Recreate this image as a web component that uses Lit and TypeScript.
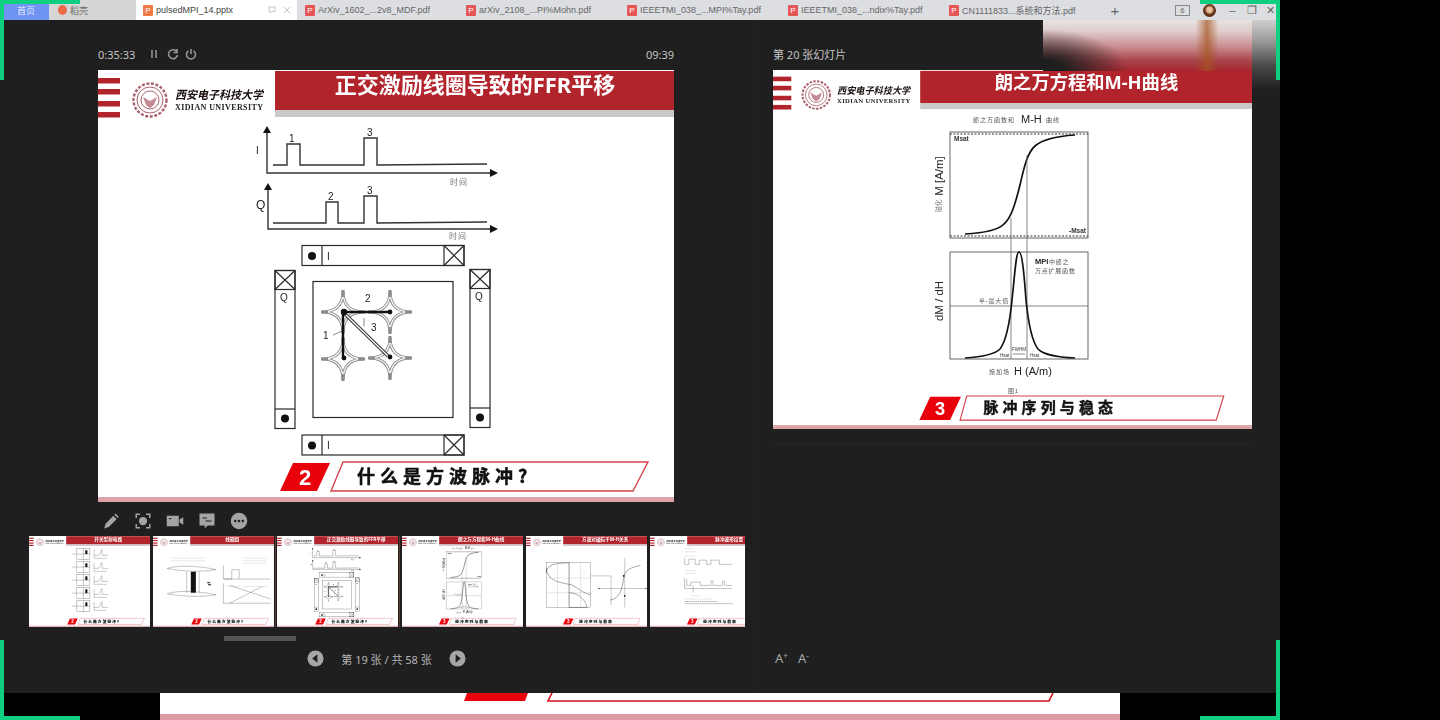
import { LitElement, html, svg, css } from "lit";
import { customElement, property } from "lit/decorators.js";

const STRIPES = [8, 19, 31, 42];

function star(cx: number, cy: number) {
  const r = 21;
  const d = `M${cx} ${cy - r}Q${cx} ${cy} ${cx + r} ${cy}Q${cx} ${cy} ${cx} ${cy + r}Q${cx} ${cy} ${cx - r} ${cy}Q${cx} ${cy} ${cx} ${cy - r}Z`;
  const tips = `M${cx} ${cy - r - 1}V${cy - r + 6}M${cx} ${cy + r + 1}V${cy + r - 6}M${cx - r - 1} ${cy}H${cx - r + 6}M${cx + r + 1} ${cy}H${cx + r - 6}`;
  return svg`<path class="star-o" d=${d}></path><path class="star-i" d=${d}></path><path class="star-t" d=${tips}></path>`;
}

function xBox(x: number, y: number, w: number, h: number) {
  return svg`<rect class="ln" x=${x} y=${y} width=${w} height=${h}></rect>
    <path class="ln" d="M${x} ${y}L${x + w} ${y + h}M${x + w} ${y}L${x} ${y + h}"></path>`;
}

function axis(x: number, top: number, y: number) {
  return svg`<path class="ln2" d="M${x} ${top}V${y}H493"></path>
    <path class="fillk" d="M${x - 4} ${top + 2}L${x} ${top - 5}L${x + 4} ${top + 2}Z"></path>
    <path class="fillk" d="M490 ${y - 4}L498 ${y}L490 ${y + 4}Z"></path>`;
}

function slide19Body() {
  return svg`<g transform="translate(-98,-70)">
    ${axis(267, 131, 173)}
    <path class="ln2" d="M273 165H287V144H300V165H364V138H377V165L487 164"></path>
    <text class="lbl" x="289" y="142">1</text>
    <text class="lbl" x="367" y="136">3</text>
    <text class="lbl" x="256" y="154">I</text>
    <text class="tiny" x="450" y="185">时间</text>
    ${axis(268, 188, 229)}
    <path class="ln2" d="M273 223H326V202H338V223H364V196H377V223L487 222"></path>
    <text class="lbl" x="328" y="200">2</text>
    <text class="lbl" x="367" y="194">3</text>
    <text class="lbl-b" x="256" y="209">Q</text>
    <text class="tiny" x="449" y="239">时间</text>

    <rect class="ln" x="302" y="245.5" width="162" height="20"></rect>
    <path class="ln" d="M322 245.5V265.5"></path>
    ${xBox(444, 245.5, 20, 20)}
    <circle class="fillk" cx="312" cy="256" r="4"></circle>
    <text class="lbl" x="327" y="260">I</text>

    <rect class="ln" x="302" y="435" width="162" height="20"></rect>
    <path class="ln" d="M322 435V455"></path>
    ${xBox(444, 435, 20, 20)}
    <circle class="fillk" cx="312" cy="445.5" r="4"></circle>
    <text class="lbl" x="327" y="449">I</text>

    <rect class="ln" x="275" y="270.5" width="20" height="158"></rect>
    ${xBox(275, 270.5, 20, 19)}
    <path class="ln" d="M275 409H295"></path>
    <circle class="fillk" cx="285" cy="418.5" r="4"></circle>
    <text class="lbl" x="280" y="301">Q</text>

    <rect class="ln" x="470" y="269.5" width="20" height="158"></rect>
    ${xBox(470, 269.5, 20, 19)}
    <path class="ln" d="M470 408H490"></path>
    <circle class="fillk" cx="480" cy="417.5" r="4"></circle>
    <text class="lbl" x="475" y="300">Q</text>

    <rect class="ln" x="313" y="281.5" width="140" height="136"></rect>
    ${star(343, 312)} ${star(390, 312)} ${star(343, 359)} ${star(390, 358)}
    <path class="ln3" d="M343 312H390M343 312V359"></path>
    <path class="star-o2" d="M345 314L388 356"></path>
    <path class="star-i2" d="M345 314L388 356"></path>
    <circle class="fillk" cx="344" cy="312" r="3.2"></circle>
    <circle class="fillk" cx="390" cy="312" r="2.4"></circle>
    <circle class="fillk" cx="344" cy="358" r="2.4"></circle>
    <circle class="fillk" cx="390" cy="357" r="2.4"></circle>
    <path class="thin" d="M333 335L342 331M364 318V326"></path>
    <text class="lbl" x="323" y="339">1</text>
    <text class="lbl" x="365" y="302">2</text>
    <text class="lbl" x="371" y="331">3</text>
  </g>`;
}

function slide20Body() {
  const curve1 = "M965 234C985 233 998 230 1004 224C1011 218 1015 205 1020 185C1024 168 1027 153 1035 146C1044 138 1060 136 1075 135";
  const curve2 = "M965 358C982 357 994 355 1000 349C1007 340 1010 320 1012 300C1015 272 1016 252 1019 252C1022 252 1024 272 1026 300C1028 320 1031 340 1038 349C1044 355 1056 357 1075 358";
  return svg`<g transform="scale(1.2025) translate(-773,-70)">
    <text class="cap" x="973" y="122">郎之万函数和</text>
    <text class="cap-b" x="1021" y="123">M-H</text>
    <text class="cap" x="1046" y="122">曲线</text>
    <rect class="plot" x="950" y="132" width="138" height="106"></rect>
    <path class="dash" d="M950 134H1088M950 236H1088"></path>
    <path class="curve" d=${curve1}></path>
    <text class="p-s" x="954" y="141">Msat</text>
    <text class="p-s" x="1069" y="233">-Msat</text>
    <text class="rot" transform="translate(943,176) rotate(-90)">M [A/m]</text>
    <text class="rot-s" transform="translate(941,206) rotate(-90)">磁化</text>
    <path class="vl" d="M1011 218V359M1027 155V359"></path>
    <rect class="plot" x="950" y="252" width="138" height="107"></rect>
    <path class="vl" d="M950 306H1088"></path>
    <path class="curve" d=${curve2}></path>
    <text class="p-b" x="1035" y="264">MPI</text>
    <text class="cap2" x="1049" y="264">中郎之</text>
    <text class="cap2" x="1035" y="273">万点扩展函数</text>
    <text class="cap2" x="979" y="303">半-最大值</text>
    <text class="p-t" x="1012" y="351">FWHM</text>
    <path class="thin" d="M1013 354H1025"></path>
    <text class="p-t" x="1000" y="357">Hsat</text>
    <text class="p-t" x="1030" y="357">Hsat</text>
    <text class="rot" transform="translate(943,301) rotate(-90)">dM / dH</text>
    <text class="cap" x="989" y="374">施加场</text>
    <text class="cap-c" x="1014" y="375">H (A/m)</text>
    <text class="cap2" x="1008" y="393">图1</text>
  </g>`;
}

function thumbCircuit() {
  const rows = [60, 122, 184, 246, 308];
  return svg`${rows.map(
    (y) => svg`
      <rect class="ln" x="228" y=${y} width="62" height="52"></rect>
      <path class="ln" d="M259 ${y}V${y + 52}M228 ${y + 26}H290"></path>
      <rect class="fillk" x="268" y=${y + 8} width="10" height="18"></rect>
      <path class="ln" d="M310 ${y + 6}V${y + 46}H370M310 ${y + 32}H330C340 ${y + 32} 340 ${y + 4} 348 ${y + 4}V${y + 32}H376"></path>
      <path class="ln" d="M205 ${y + 26}H226"></path>`
  )}`;
}

function thumbCoil() {
  return svg`
    <path class="ln2" d="M68 155C120 165 220 175 300 160C240 145 120 135 68 155Z"></path>
    <path class="ln2" d="M68 275C120 285 220 295 300 280C240 265 120 255 68 275Z"></path>
    <rect class="fillk" x="180" y="170" width="24" height="100"></rect>
    <path class="ln" d="M160 170V270M220 170V270"></path>
    <path class="thin" d="M85 105H250M85 118H250"></path>
    <path class="ln2" d="M335 140V205H560M335 205H375V160H410V205"></path>
    <path class="ln2" d="M335 225V320H560M365 235L560 300M365 320L520 240"></path>
    <path class="thin" d="M430 105H540M430 118H540M430 130H540M350 240H420M430 240H540"></path>
    <path class="fillk" d="M258 220h14v5h-14zM262 230h14v5h-14z"></path>`;
}

function thumbBH() {
  return svg`
    <rect class="ln" x="96" y="125" width="212" height="215"></rect>
    <path class="thin" d="M96 200H308M96 270H308M150 125V340M205 125V340M260 125V340"></path>
    <path class="curve" d="M96 175C100 140 130 128 205 128V230C230 230 260 270 308 280"></path>
    <path class="curve" d="M96 150C100 210 150 220 205 230V340H290C290 320 260 270 205 270"></path>
    <path class="ln" d="M308 190H405V330M340 250H580"></path>
    <path class="curve" d="M400 305C450 300 460 240 465 200C470 160 500 150 545 140"></path>
    <path class="ln" d="M470 105V340"></path>
    <path class="fillk" d="M345 250l6-4v8zM575 250l-6-4v8z"></path>
    <circle class="fillk" cx="465" cy="190" r="4"></circle>
    <circle class="fillk" cx="470" cy="285" r="4"></circle>`;
}

function thumbPulses() {
  return svg`
    <path class="thin" d="M165 60H205M165 75H220M165 95H215M165 165H215M165 178H225"></path>
    <path class="ln2" d="M165 105V135H185V110H215V135H235V115H270V135H290V115H330V135H390"></path>
    <path class="ln2" d="M165 200V250H390M175 205V235H195V220H240V235H290V215H300V235H345V215H355V235H390M205 235V270"></path>
    <path class="thin" d="M195 285H240M165 300H300"></path>
    <text class="t-mini" x="165" y="315">1 2 3 4 5 6 7 8 9 10 11 12 13 14</text>
    <path class="ln2" d="M165 322H395"></path>`;
}

const SLIDES: Record<string, { title: string; foot: string; num: string; body: () => unknown; fx: number }> = {
  a: { title: "开关型射电路", foot: "什么是方波脉冲?", num: "2", body: thumbCircuit, fx: 0 },
  b: { title: "线圈组", foot: "什么是方波脉冲?", num: "2", body: thumbCoil, fx: 0 },
  c: { title: "正交激励线圈导致的FFR平移", foot: "什么是方波脉冲?", num: "2", body: slide19Body, fx: 0 },
  d: { title: "朗之万方程和M-H曲线", foot: "脉冲序列与稳态", num: "3", body: slide20Body, fx: -9 },
  e: { title: "方波对磁粒子M-H关系", foot: "脉冲序列与稳态", num: "3", body: thumbBH, fx: -9 },
  f: { title: "脉冲波形设置", foot: "脉冲序列与稳态", num: "3", body: thumbPulses, fx: -9 },
};

@customElement("slide-view")
class SlideView extends LitElement {
  @property() kind = "c";
  static styles = css`
    :host { display: block; }
    svg { display: block; width: 100%; height: auto; background: #fff; }
    text { font-family: "Liberation Sans", "Noto Sans CJK SC", sans-serif; }
    .red { fill: #b2242c; }
    .shade { fill: #c9c9c9; }
    .title { fill: #fff; font: 700 22px "Noto Sans", "Noto Sans CJK SC", sans-serif; text-anchor: middle; }
    .logo-cn { fill: #1c1010; font: italic 700 11.5px "Noto Sans CJK SC", sans-serif; }
    .logo-en { fill: #222; font: 700 8px "Liberation Serif", serif; }
    .seal { fill: none; stroke: #a9616c; stroke-width: 1; }
    .seal-d { fill: none; stroke: #a9616c; stroke-width: 2.4; stroke-dasharray: 3 1.6; }
    .seal-f { fill: #c48a92; }
    .flag { fill: #e8000b; }
    .num { fill: #fff; font: 700 22px "Liberation Sans Narrow", "Liberation Sans", sans-serif; text-anchor: middle; }
    .outline { fill: #fff; stroke: #d2434f; stroke-width: 1.4; }
    .foot { fill: #111; stroke: #111; stroke-width: .5; font: 700 18px "Noto Sans CJK SC", sans-serif; letter-spacing: 5px; }
    .base { fill: #dca3a8; }
    .ln { fill: none; stroke: #2a2a2a; stroke-width: 1.2; }
    .ln2 { fill: none; stroke: #333; stroke-width: 1.4; }
    .ln3 { fill: none; stroke: #111; stroke-width: 2.4; }
    .thin { fill: none; stroke: #555; stroke-width: .7; }
    .fillk { fill: #111; }
    .star-o { fill: none; stroke: #8d8d8d; stroke-width: 3; }
    .star-i { fill: none; stroke: #fff; stroke-width: 1.2; }
    .star-t { fill: none; stroke: #8d8d8d; stroke-width: 3; }
    .star-o2 { fill: none; stroke: #333; stroke-width: 3.2; }
    .star-i2 { fill: none; stroke: #fff; stroke-width: 1.2; }
    .lbl { font-size: 10px; fill: #222; }
    .lbl-b { font-size: 12px; fill: #222; }
    .tiny { font-size: 8px; fill: #777; letter-spacing: 1px; }
    .cap { font-size: 6px; fill: #555; letter-spacing: 1px; }
    .cap2 { font-size: 6px; fill: #555; letter-spacing: .8px; }
    .cap-b { font-size: 11px; fill: #222; }
    .cap-c { font-size: 11px; fill: #222; }
    .plot { fill: none; stroke: #555; stroke-width: .9; }
    .dash { fill: none; stroke: #333; stroke-width: 1; stroke-dasharray: 2 1.5; }
    .curve { fill: none; stroke: #111; stroke-width: 1.7; }
    .vl { fill: none; stroke: #666; stroke-width: .8; }
    .p-s { font-size: 6.5px; fill: #333; font-weight: 700; }
    .p-b { font-size: 7.5px; fill: #222; font-weight: 700; }
    .p-t { font-size: 4.5px; fill: #333; }
    .rot { font-size: 11.5px; fill: #222; text-anchor: middle; }
    .rot-s { font-size: 6.5px; fill: #777; text-anchor: middle; }
    .t-mini { font-size: 11px; fill: #333; }
  `;
  render() {
    const s = SLIDES[this.kind];
    const f = s.fx;
    const top = f ? 233 : 245;
    const tr = f ? 542 : 550;
    const br = f ? 533 : 535;
    const bl = f ? 225 : 233;
    const rl = f ? 176 : 182;
    return html`<svg viewBox="0 0 576 432" xmlns="http://www.w3.org/2000/svg">
      ${s.body()}
      ${STRIPES.map((y) => svg`<rect class="red" x="0" y=${y} width="22" height="5.5"></rect>`)}
      <circle class="seal-d" cx="52" cy="30" r="16.5"></circle>
      <circle class="seal" cx="52" cy="30" r="13"></circle>
      <circle class="seal" cx="52" cy="30" r="9"></circle>
      <path class="seal-f" d="M45 27L52 31L59 27L56 35L52 38L48 35Z"></path>
      <text class="logo-cn" x="77" y="29" textLength="88" lengthAdjust="spacingAndGlyphs">西安电子科技大学</text>
      <text class="logo-en" x="77" y="40" textLength="88">XIDIAN UNIVERSITY</text>
      <rect class="red" x="177" y="1" width="399" height="39"></rect>
      <rect class="shade" x="177" y="40" width="399" height="7"></rect>
      <text class="title" x="377" y="23">${s.title}</text>
      <path class="flag" d="M${rl} 421L${rl + 13} 393H${rl + 50}L${rl + 37} 421Z"></path>
      <text class="num" x=${rl + 25} y="415">${s.num}</text>
      <path class="outline" d="M${bl} 421L${top} 392H${tr}L${br} 421Z"></path>
      <text class="foot" x=${f ? 253 : 259} y="413">${s.foot}</text>
      <rect class="base" x="0" y="427" width="576" height="5"></rect>
    </svg>`;
  }
}

const TABS = [
  "ArXiv_1602_...2v8_MDF.pdf",
  "arXiv_2108_...PI%Mohn.pdf",
  "IEEETMI_038_...MPI%Tay.pdf",
  "IEEETMI_038_...ndix%Tay.pdf",
  "CN1111833...系统和方法.pdf",
];

const ICONS = [
  svg`<path d="M3 22l1.5-6L15 5l4.5 4.5L9 20z M16.5 3.5l1.5-1.5 4.5 4.5-1.5 1.5z"></path>`,
  svg`<circle cx="12" cy="12" r="5.5"></circle><path class="open" d="M3 8V3h5M16 3h5v5M21 16v5h-5M8 21H3v-5"></path>`,
  svg`<path d="M1 5h16v14H1z M18 10l5-3v10l-5-3z"></path><path class="cut" d="M4 8h3v1.5H4z"></path>`,
  svg`<path d="M2 2h20v16H13l-4 4v-4H2z"></path><path class="cutl" d="M6 8h6M10 12h8"></path>`,
  svg`<circle cx="12" cy="12" r="11"></circle><circle class="cut" cx="7" cy="12" r="1.7"></circle><circle class="cut" cx="12" cy="12" r="1.7"></circle><circle class="cut" cx="17" cy="12" r="1.7"></circle>`,
];

const THUMBS = ["a", "b", "c", "d", "e", "f"];

@customElement("app-root")
class AppRoot extends LitElement {
  static styles = css`
    :host { display: block; position: relative; width: 1440px; height: 720px; background: #000; overflow: hidden;
      font-family: "Noto Sans", "Noto Sans CJK SC", sans-serif; }
    .win { width: 1280px; height: 693px; background: #1f1f1f; display: flex; flex-direction: column; }

    .tabs { height: 20px; background: #dcdee1; display: flex; align-items: center; font: 9px "Liberation Sans", "Noto Sans CJK SC", sans-serif; color: #666; flex: none; white-space: nowrap; }
    .home { margin-left: 3px; width: 46px; height: 20px; background: #6f93f2; color: #e8eeff; display: flex; align-items: center; justify-content: center; }
    .husk { width: 87px; height: 20px; display: flex; align-items: center; gap: 3px; padding-left: 9px; box-sizing: border-box; background: #d6d6d6; }
    .dot { width: 9px; height: 10px; border-radius: 50%; background: #ee6b4a; flex: none; }
    .tab { width: 161px; height: 20px; display: flex; align-items: center; gap: 3px; padding-left: 8px; box-sizing: border-box; }
    .tab.on { background: #fff; color: #444; width: 161px; padding-left: 7px; }
    .tab.on .act { margin-left: auto; display: flex; gap: 7px; padding-right: 6px; align-items: center; }
    .tab.on .act svg { width: 8px; height: 8px; fill: none; stroke: #c4c4c4; stroke-width: 1; display: block; }
    .fi { width: 10px; height: 11px; background: #e55656; color: #fff; font-size: 8px; line-height: 11px; text-align: center; flex: none; border-radius: 1px; }
    .fi.o { background: #ee7a45; }
    .plus { width: 26px; text-align: center; font-size: 15px; color: #666; }
    .ctl { margin-left: auto; display: flex; align-items: center; color: #666; }
    .ctl > span { width: 19px; text-align: center; font-size: 11px; display: flex; justify-content: center; align-items: center; }
    .ctl > .six { border: 1px solid #888; font-size: 7px; width: 13px; height: 9px; margin-right: 13px; }
    .ctl > .ava { width: 13px; height: 13px; border-radius: 50%; background: radial-gradient(circle at 50% 45%, #e7c0a0 0 25%, #6a3418 50%, #2e1a12 100%); margin-right: 7px; }

    .main { flex: 1; display: flex; min-height: 0; }
    .left { width: 757px; flex: none; display: flex; flex-direction: column; border-right: 1px solid #242424; box-sizing: content-box; }
    .right { flex: 1; display: flex; flex-direction: column; padding: 0 28px 0 15px; }
    .head { height: 50px; display: flex; align-items: center; justify-content: space-between; font-size: 11px; color: #c4c4c4; padding-top: 18px; box-sizing: border-box; flex: none; }
    .stage { padding-left: 98px; width: 576px; }
    .timer { display: flex; align-items: center; gap: 13px; }
    .timer svg { width: 12px; height: 12px; fill: none; stroke: #999; stroke-width: 1.5; display: block; }
    .ticons { display: flex; align-items: center; gap: 6.5px; }
    .big { width: 576px; filter: blur(.3px); }
    .tools { height: 34px; display: flex; align-items: center; padding: 4px 0 0 95px; box-sizing: border-box; flex: none; }
    .tools span { width: 32px; display: flex; justify-content: center; }
    .tools svg { width: 18px; height: 18px; fill: #a4a4a4; display: block; }
    .tools .open { fill: none; stroke: #a4a4a4; stroke-width: 2; }
    .tools .cut { fill: #1f1f1f; }
    .tools .cutl { fill: none; stroke: #1f1f1f; stroke-width: 1.6; }
    .strip { display: flex; gap: 3.2px; margin-left: 29px; width: 716px; overflow: hidden; flex: none; }
    .thumb { width: 121px; flex: none; filter: blur(.3px); }
    .thumb.sel { outline: 1px solid #5b3b33; outline-offset: 1px; }
    .sbar { height: 22px; padding: 9px 0 0 224px; box-sizing: border-box; flex: none; }
    .sbar div { width: 72px; height: 5px; background: #545454; }
    .pager { display: flex; align-items: center; justify-content: center; gap: 17px; height: 20px; font-size: 11px; color: #b4b4b4; padding-left: 16px; }
    .pager svg { width: 17px; height: 17px; display: block; }
    .sl { width: 479px; filter: blur(.3px); }
    .rule { height: 1px; background: #282828; margin-top: 15px; }
    .zoom { margin-top: auto; margin-bottom: 26px; display: flex; gap: 10px; color: #a8a8a8; font-size: 13px; padding-left: 2px; }
    .zoom sup { font-size: 8px; line-height: 0; vertical-align: 4px; }

    .under { position: absolute; left: 160px; top: 693px; width: 960px; height: 27px; background: #fff; display: block; }
    .under .r { fill: #e8000b; }
    .under .o { fill: none; stroke: #d3101f; stroke-width: 1.6; }
    .under .p { fill: #dd9ca3; }

    .glow { position: absolute; left: 1043px; top: 20px; width: 209px; height: 51px;
      background:
        radial-gradient(ellipse 85px 42px at 0% 100%, #1f1f1f 25%, rgba(31,31,31,0) 100%),
        linear-gradient(90deg, rgba(150,70,10,0) 73%, rgba(165,85,30,.7) 78.5%, rgba(150,70,10,0) 84%),
        linear-gradient(180deg, #e8e2e2 0%, #e0cccc 22%, #c98d90 52%, #a8444a 80%, #a5262e 100%);
    }
    .glow2 { position: absolute; left: 1252px; top: 20px; width: 28px; height: 70px;
      background: linear-gradient(180deg, #cfcfcf 0%, #9a9a9a 30%, #4a4a4a 65%, #1f1f1f 100%); }
    .g { position: absolute; background: #10cf80; }
    .h { width: 80px; height: 4px; }
    .v { width: 4px; height: 80px; }
    .at-l { left: 0; }
    .at-rh { left: 1200px; }
    .at-rv { left: 1276px; }
    .at-t { top: 0; }
    .at-bv { top: 640px; }
    .at-bh { top: 716px; }
  `;

  private fileIcon(cls = "") {
    return html`<span class="fi ${cls}">P</span>`;
  }

  render() {
    return html`
      <div class="win">
        <div class="tabs">
          <div class="home">首页</div>
          <div class="husk"><span class="dot"></span>稻壳</div>
          <div class="tab on">${this.fileIcon("o")}<span>pulsedMPI_14.pptx</span>
            <span class="act">
              <svg viewBox="0 0 8 8"><path d="M1 1h6v4.5H4L2.5 7V5.5H1z"></path></svg>
              <svg viewBox="0 0 8 8"><path d="M1 1L7 7M7 1L1 7"></path></svg>
            </span></div>
          ${TABS.map((t) => html`<div class="tab">${this.fileIcon()}<span>${t}</span></div>`)}
          <div class="plus">+</div>
          <div class="ctl">
            <span class="six">6</span><span class="ava"></span><span>–</span><span>❐</span><span>✕</span>
          </div>
        </div>
        <div class="main">
          <div class="left">
            <div class="stage">
              <div class="head">
                <div class="timer">
                  <span>0:35:33</span>
                  <span class="ticons">
                    <svg viewBox="0 0 12 12"><path d="M4 2V10M8 2V10"></path></svg>
                    <svg viewBox="0 0 12 12"><path d="M10 4A4.5 4.5 0 1 0 10.5 7M10 1V4.5H6.5"></path></svg>
                    <svg viewBox="0 0 12 12"><path d="M6 1V6M3.5 2.8A4.5 4.5 0 1 0 8.5 2.8"></path></svg>
                  </span>
                </div>
                <span>09:39</span>
              </div>
              <slide-view class="big" kind="c"></slide-view>
            </div>
            <div class="tools">${ICONS.map((i) => html`<span><svg viewBox="0 0 24 24">${i}</svg></span>`)}</div>
            <div class="strip">
              ${THUMBS.map((k) => html`<slide-view class="thumb ${k === "c" ? "sel" : ""}" kind=${k}></slide-view>`)}
            </div>
            <div class="sbar"><div></div></div>
            <div class="pager">
              <svg viewBox="0 0 18 18"><circle cx="9" cy="9" r="8.5" fill="#a6a6a6"></circle><path d="M11 4.5L5.5 9L11 13.5Z" fill="#1f1f1f"></path></svg>
              <span>第 19 张 / 共 58 张</span>
              <svg viewBox="0 0 18 18"><circle cx="9" cy="9" r="8.5" fill="#a6a6a6"></circle><path d="M7 4.5L12.5 9L7 13.5Z" fill="#1f1f1f"></path></svg>
            </div>
          </div>
          <div class="right">
            <div class="head"><span>第 20 张幻灯片</span></div>
            <slide-view class="sl" kind="d"></slide-view>
            <div class="rule"></div>
            <div class="zoom"><span>A<sup>+</sup></span><span>A<sup>-</sup></span></div>
          </div>
        </div>
      </div>
      <svg class="under" viewBox="0 0 960 27">
        <path class="r" d="M307 0H368L365 8H304Z"></path>
        <path class="o" d="M392 0L388 8H889L893 0"></path>
        <rect class="p" x="0" y="21" width="960" height="6"></rect>
      </svg>
      <div class="glow"></div>
      <div class="glow2"></div>
      <div class="g h at-l at-t"></div>
      <div class="g v at-l at-t"></div>
      <div class="g h at-rh at-t"></div>
      <div class="g v at-rv at-t"></div>
      <div class="g v at-l at-bv"></div>
      <div class="g h at-l at-bh"></div>
      <div class="g v at-rv at-bv"></div>
      <div class="g h at-rh at-bh"></div>
    `;
  }
}
